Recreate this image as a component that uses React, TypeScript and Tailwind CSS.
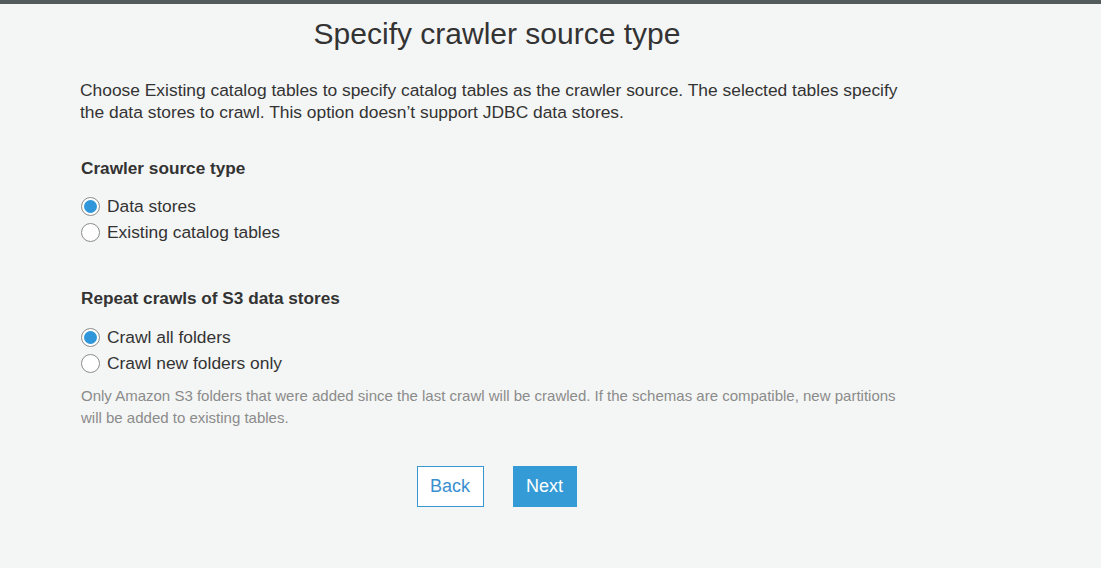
const font = { fontFamily: '"Liberation Sans", Arial, sans-serif' }

function Radio({ label, checked }: { label: string; checked?: boolean }) {
  return (
    <label className="flex items-center h-[26px] text-[17.4px] text-[#333]">
      <span className="w-[19px] h-[19px] rounded-full border border-[#8c8c8c] bg-white flex items-center justify-center ml-[1px] mr-[7px]">
        {checked && <span className="w-[13px] h-[13px] rounded-full bg-[#2f96da]" />}
      </span>
      {label}
    </label>
  )
}

export default function App() {
  return (
    <div style={font} className="min-h-[568px] bg-[#f4f6f5] text-[#333]">
      <div className="h-[4px] bg-[#535b5b]" />
      <div className="w-[835px] ml-[80px]">
        <h1 className="text-center text-[30px] leading-[32px] pt-[14px] pr-[1px]">Specify crawler source type</h1>
        <p className="mt-[29px] text-[17.4px] leading-[22px]">
          Choose Existing catalog tables to specify catalog tables as the crawler source. The selected tables specify
          the data stores to crawl. This option doesn’t support JDBC data stores.
        </p>
        <h2 className="mt-[35px] text-[17.2px] font-bold leading-[20px] pl-[1px]">Crawler source type</h2>
        <div className="mt-[15px]">
          <Radio label="Data stores" checked />
          <Radio label="Existing catalog tables" />
        </div>
        <h2 className="mt-[43px] text-[17.2px] font-bold leading-[20px] pl-[1px]">Repeat crawls of S3 data stores</h2>
        <div className="mt-[16px]">
          <Radio label="Crawl all folders" checked />
          <Radio label="Crawl new folders only" />
        </div>
        <p className="mt-[9px] text-[15px] leading-[22px] text-[#8b8b8b] pl-[1px]">
          Only Amazon S3 folders that were added since the last crawl will be crawled. If the schemas are compatible, new partitions
          will be added to existing tables.
        </p>
        <div className="flex justify-center gap-[29px] mt-[37px] pr-[2px]">
          <button className="h-[41px] w-[67px] bg-white border border-[#3a96cf] text-[#3a8fd0] text-[18px]">Back</button>
          <button className="h-[41px] w-[64px] bg-[#349bd7] text-white text-[18px]">Next</button>
        </div>
      </div>
    </div>
  )
}
